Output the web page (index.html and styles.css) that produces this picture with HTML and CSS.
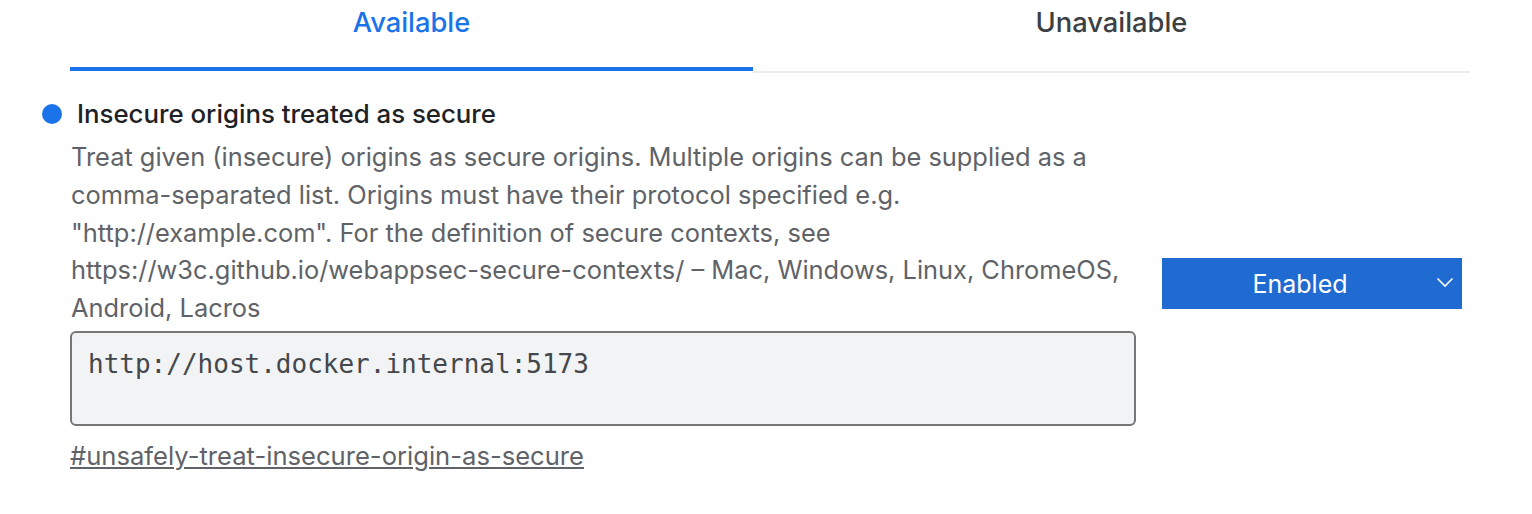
FILE: index.html
```html
<!DOCTYPE html>
<html>
<head>
<meta charset="utf-8">
<link rel="stylesheet" href="styles.css">
</head>
<body>
<div class="page">
  <div class="tabs">
    <div class="tab tab-active">Available</div>
    <div class="tab tab-inactive">Unavailable</div>
  </div>
  <div class="experiment">
    <div class="exp-main">
      <h3 class="exp-title"><span class="dot"></span>Insecure origins treated as secure</h3>
      <p class="exp-desc">Treat given (insecure) origins as secure origins. Multiple origins can be supplied as a comma-separated list. Origins must have their protocol specified e.g. "http://example.com". For the definition of secure contexts, see https://w3c.github.io/webappsec-secure-contexts/ – Mac, Windows, Linux, ChromeOS, Android, Lacros</p>
      <div class="textarea">http://host.docker.internal:5173</div>
      <a class="permalink" href="#unsafely-treat-insecure-origin-as-secure">#unsafely-treat-insecure-origin-as-secure</a>
    </div>
    <div class="exp-actions">
      <div class="select">
        <span class="select-label">Enabled</span>
        <svg class="chevron" width="18" height="11" viewBox="0 0 18 11"><path d="M1.5 1.5 L9 9 L16.5 1.5" fill="none" stroke="#fff" stroke-width="1.6"/></svg>
      </div>
    </div>
  </div>
</div>
</body>
</html>
```

FILE: styles.css
```css
html, body {
  margin: 0;
  padding: 0;
  background: #fff;
}
body {
  font-family: Inter, "Noto Sans", Roboto, sans-serif;
}
.page {
  width: 1400px;
  padding-left: 70px;
}
.tabs {
  display: flex;
  height: 73px;
}
.tab {
  display: flex;
  justify-content: center;
  padding-top: 5px;
  box-sizing: border-box;
  font-size: 27.3px;
  font-weight: 500;
  line-height: 36px;
}
.tab-active {
  width: 683px;
  color: #1a73e8;
  border-bottom: 4px solid #1a73e8;
  height: 71px;
}
.tab-inactive {
  flex: 1;
  color: #3c4043;
  border-bottom: 2px solid #ececec;
  height: 73px;
  align-self: flex-start;
}
.experiment {
  display: flex;
  align-items: center;
  gap: 26px;
  padding-top: 22px;
}
.exp-main {
  width: 1066px;
}
.exp-title {
  margin: 0;
  font-size: 25.8px;
  font-weight: 500;
  color: #202124;
  line-height: 38px;
  display: flex;
  align-items: center;
}
.dot {
  width: 20px;
  height: 20px;
  border-radius: 50%;
  background: #1a73e8;
  margin-left: -28px;
  margin-right: 15px;
  flex: none;
}
.exp-desc {
  margin: 5px 0 0 1px;
  font-size: 25.4px;
  line-height: 37.75px;
  color: #5f6368;
}
.textarea {
  margin-top: 4px;
  box-sizing: border-box;
  height: 95px;
  border: 2px solid #767676;
  border-radius: 6px;
  background: #f1f3f4;
  padding: 13px 16px;
  font-family: "DejaVu Sans Mono", "Liberation Mono", monospace;
  font-size: 26px;
  line-height: 36px;
  color: #44474b;
}
.permalink {
  display: inline-block;
  margin-top: 13px;
  font-size: 25.6px;
  line-height: 34px;
  color: #5f6368;
  text-decoration: underline;
}
.exp-actions {
  flex: none;
}
.select {
  position: relative;
  box-sizing: border-box;
  width: 300px;
  height: 51px;
  padding-right: 24px;
  background: #1f6bd1;
  display: flex;
  align-items: center;
  justify-content: center;
  color: #fff;
  font-size: 25px;
}
.chevron {
  position: absolute;
  right: 8px;
  top: 19px;
}
```
